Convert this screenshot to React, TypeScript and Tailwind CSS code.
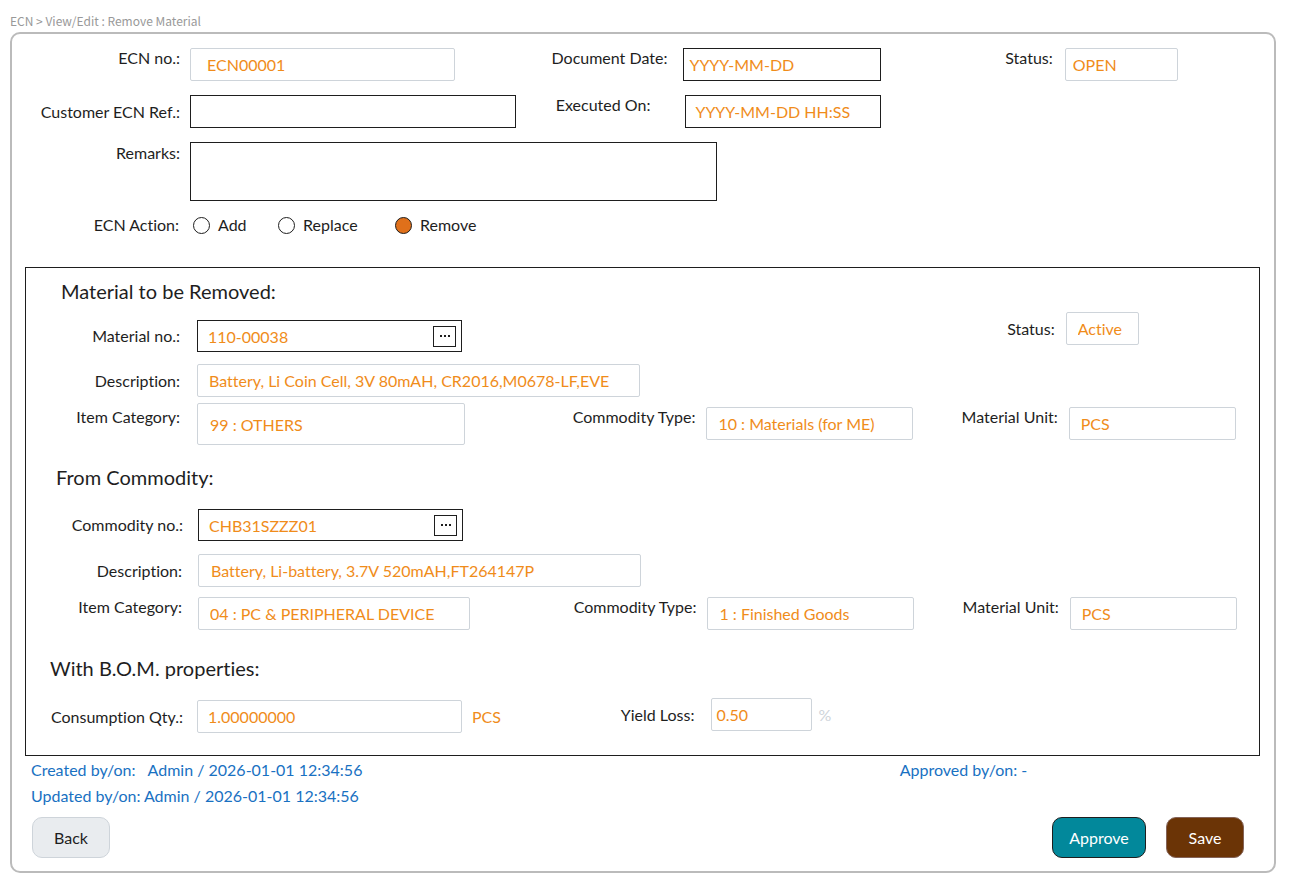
import React, { useId, useState } from 'react';
import clsx from 'clsx';

type FieldProps = {
  label: string;
  value?: string;
  readOnly?: boolean;
  className?: string;
  labelClass?: string;
  inputClass?: string;
  gap?: string;
  lookup?: boolean;
  suffix?: React.ReactNode;
};

const actions = ['Add', 'Replace', 'Remove'];

function Field({
  label,
  value = '',
  readOnly = false,
  className = 'items-start',
  labelClass,
  inputClass,
  gap = 'gap-[10px]',
  lookup = false,
  suffix,
}: FieldProps) {
  const id = useId();

  return (
    <div className={clsx('flex min-w-0', gap, className)}>
      <label htmlFor={id} className={clsx('shrink-0 text-right leading-5 whitespace-nowrap', labelClass)}>
        {label}
      </label>
      <div className={clsx('flex min-w-0', lookup && 'h-8 w-[265px] items-center border border-[#1e1e1e] pr-[5px]')}>
        <input
          id={id}
          type="text"
          defaultValue={value}
          readOnly={readOnly}
          className={clsx(
            'min-w-0 bg-white text-[#f08c1a] outline-none',
            lookup && 'h-7 flex-1',
            !lookup && 'border',
            !lookup && (readOnly ? 'rounded-xs border-[#ced4da]' : 'border-[#1e1e1e]'),
            inputClass
          )}
        />
        {lookup && (
          <button
            type="button"
            aria-label={`Look up ${label}`}
            className="flex h-[21px] w-[23px] shrink-0 items-center justify-center border border-[#1e1e1e]"
          >
            <svg viewBox="0 0 10 2" className="h-[2px] w-[10px] fill-[#1e1e1e]">
              <rect x="0" width="2" height="2" />
              <rect x="4" width="2" height="2" />
              <rect x="8" width="2" height="2" />
            </svg>
          </button>
        )}
      </div>
      {suffix}
    </div>
  );
}

export default function App() {
  const [action, setAction] = useState('Remove');

  return (
    <div className="min-h-screen bg-white pt-[10px] pr-[21px] pb-6 pl-[10px] font-['Lato','Noto_Sans',sans-serif] text-base text-[#1e1e1e] [font-variant-ligatures:none]">
      <nav className="font-['Noto_Sans_CJK_SC',sans-serif] text-xs leading-[22px] text-[#999999]">
        ECN &gt; View/Edit : Remove Material
      </nav>

      <main className="rounded-[10px] border-2 border-[#bbbbbb] pb-[13px]">
        {/* Document header */}
        <div className="grid gap-y-[14px] pt-[14px]">
          <div className="grid grid-cols-[520fr_430fr_311fr]">
            <Field label="ECN no.:" value="ECN00001" readOnly labelClass="w-[168px]" inputClass="h-[33px] w-[265px] pl-4" />
            <Field label="Document Date:" value="YYYY-MM-DD" labelClass="w-[135px]" gap="gap-4" inputClass="h-[33px] w-[198px] pl-[5px]" />
            <Field label="Status:" value="OPEN" readOnly labelClass="w-[90px]" gap="gap-3" inputClass="h-[33px] w-[113px] pl-[7px]" />
          </div>
          <div className="grid grid-cols-[520fr_430fr_311fr]">
            <Field label="Customer ECN Ref.:" className="items-center" labelClass="w-[168px]" inputClass="h-[33px] w-[326px] px-2" />
            <Field label="Executed On:" value="YYYY-MM-DD HH:SS" labelClass="w-[118px]" gap="gap-[35px]" inputClass="h-[33px] w-[196px] pl-[9px]" />
          </div>
          <div className="flex items-start gap-[10px]">
            <label htmlFor="remarks" className="w-[168px] text-right leading-[22px]">
              Remarks:
            </label>
            <textarea
              id="remarks"
              className="h-[59px] w-[527px] resize-none border border-[#1e1e1e] px-2 text-[#f08c1a] outline-none"
            />
          </div>
          <fieldset className="flex items-center gap-[14px]">
            <legend className="float-left w-[167px] text-right leading-5">ECN Action:</legend>
            <div className="grid grid-cols-[85px_117px_auto] items-center">
              {actions.map((name) => (
                <label key={name} className="flex items-center gap-2 leading-5">
                  <input
                    type="radio"
                    name="action"
                    checked={action === name}
                    onChange={() => setAction(name)}
                    className="size-[17px] appearance-none rounded-full border border-[#1e1e1e] checked:bg-[#e0701a]"
                  />
                  {name}
                </label>
              ))}
            </div>
          </fieldset>
        </div>

        {/* Material panel */}
        <section className="mt-8 mr-[14px] ml-[13px] border border-[#1e1e1e] pb-[22px]">
          <h2 className="pt-2 pl-[35px] text-xl leading-[30px]">Material to be Removed:</h2>
          <div className="mt-[6px] grid grid-cols-[514fr_389fr_329fr]">
            <Field label="Material no.:" value="110-00038" lookup className="items-center pt-2" labelClass="w-[154px]" gap="gap-[17px]" inputClass="pl-[10px]" />
            <span />
            <Field label="Status:" value="Active" readOnly className="items-center self-start" labelClass="w-[125px]" gap="gap-[11px]" inputClass="h-[33px] w-[73px] pl-[11px]" />
          </div>
          <Field label="Description:" value="Battery, Li Coin Cell, 3V 80mAH, CR2016,M0678-LF,EVE" readOnly className="mt-3 items-center" labelClass="w-[154px]" gap="gap-[17px]" inputClass="h-[33px] w-[443px] pl-[11px]" />
          <div className="mt-[6px] grid grid-cols-[514fr_389fr_329fr]">
            <Field label="Item Category:" value="99 : OTHERS" readOnly labelClass="w-[154px] pt-1" gap="gap-[17px]" inputClass="h-[42px] w-[268px] pl-3" />
            <Field label="Commodity Type:" value="10 : Materials (for ME)" readOnly className="items-start pt-1" labelClass="w-[155px]" gap="gap-[11px]" inputClass="h-[33px] w-[207px] pl-[11px]" />
            <Field label="Material Unit:" value="PCS" readOnly className="items-start pt-1" labelClass="w-[128px]" gap="gap-[11px]" inputClass="h-[33px] w-[167px] pl-[11px]" />
          </div>

          <h2 className="mt-[17px] pl-[30px] text-xl leading-[30px]">From Commodity:</h2>
          <Field label="Commodity no.:" value="CHB31SZZZ01" lookup className="mt-[17px] items-center" labelClass="w-[157px]" gap="gap-[15px]" inputClass="pl-[10px]" />
          <Field label="Description:" value="Battery, Li-battery, 3.7V 520mAH,FT264147P" readOnly className="mt-[13px] items-center" labelClass="w-[156px]" gap="gap-4" inputClass="h-[33px] w-[443px] pl-3" />
          <div className="mt-[10px] grid grid-cols-[514fr_389fr_329fr]">
            <Field label="Item Category:" value="04 : PC & PERIPHERAL DEVICE" readOnly labelClass="w-[156px]" gap="gap-4" inputClass="h-[33px] w-[272px] pl-[11px]" />
            <Field label="Commodity Type:" value="1 : Finished Goods" readOnly labelClass="w-[156px]" gap="gap-[11px]" inputClass="h-[33px] w-[207px] pl-[11px]" />
            <Field label="Material Unit:" value="PCS" readOnly labelClass="w-[129px]" gap="gap-[11px]" inputClass="h-[33px] w-[167px] pl-[11px]" />
          </div>

          <h2 className="mt-[23px] pl-6 text-xl leading-[30px]">With B.O.M. properties:</h2>
          <div className="mt-[15px] grid grid-cols-[514fr_718fr]">
            <Field
              label="Consumption Qty.:"
              value="1.00000000"
              readOnly
              className="items-center pt-[2px]"
              labelClass="w-[157px]"
              gap="gap-[14px]"
              inputClass="h-[33px] w-[265px] pl-[10px]"
              suffix={<span className="-ml-1 text-[#f08c1a]">PCS</span>}
            />
            <Field
              label="Yield Loss:"
              value="0.50"
              readOnly
              className="items-center self-start"
              labelClass="w-[154px]"
              gap="gap-[17px]"
              inputClass="h-[33px] w-[101px] pl-1"
              suffix={<span className="-ml-[11px] text-[#ced4da]">%</span>}
            />
          </div>
        </section>

        {/* Audit trail */}
        <div className="grid grid-cols-[868fr_374fr] pt-[1px] pl-[19px] leading-[26px] text-[#1971c2]">
          <div>
            <p className="flex gap-3">
              <span>Created by/on:</span>
              <span>Admin / 2026-01-01 12:34:56</span>
            </p>
            <p>Updated by/on: Admin / 2026-01-01 12:34:56</p>
          </div>
          <p>Approved by/on: -</p>
        </div>

        <div className="flex gap-5 pt-2 pr-[30px] pl-5">
          <button type="button" className="h-[41px] w-[78px] rounded-[10px] border border-[#ced4da] bg-[#e9ecef]">
            Back
          </button>
          <button type="button" className="ml-auto h-[41px] w-[94px] rounded-[10px] border border-[#1e1e1e] bg-[#02889b] text-white">
            Approve
          </button>
          <button type="button" className="h-[41px] w-[78px] rounded-[10px] border border-[#846358] bg-[#6b3406] text-white">
            Save
          </button>
        </div>
      </main>
    </div>
  );
}
